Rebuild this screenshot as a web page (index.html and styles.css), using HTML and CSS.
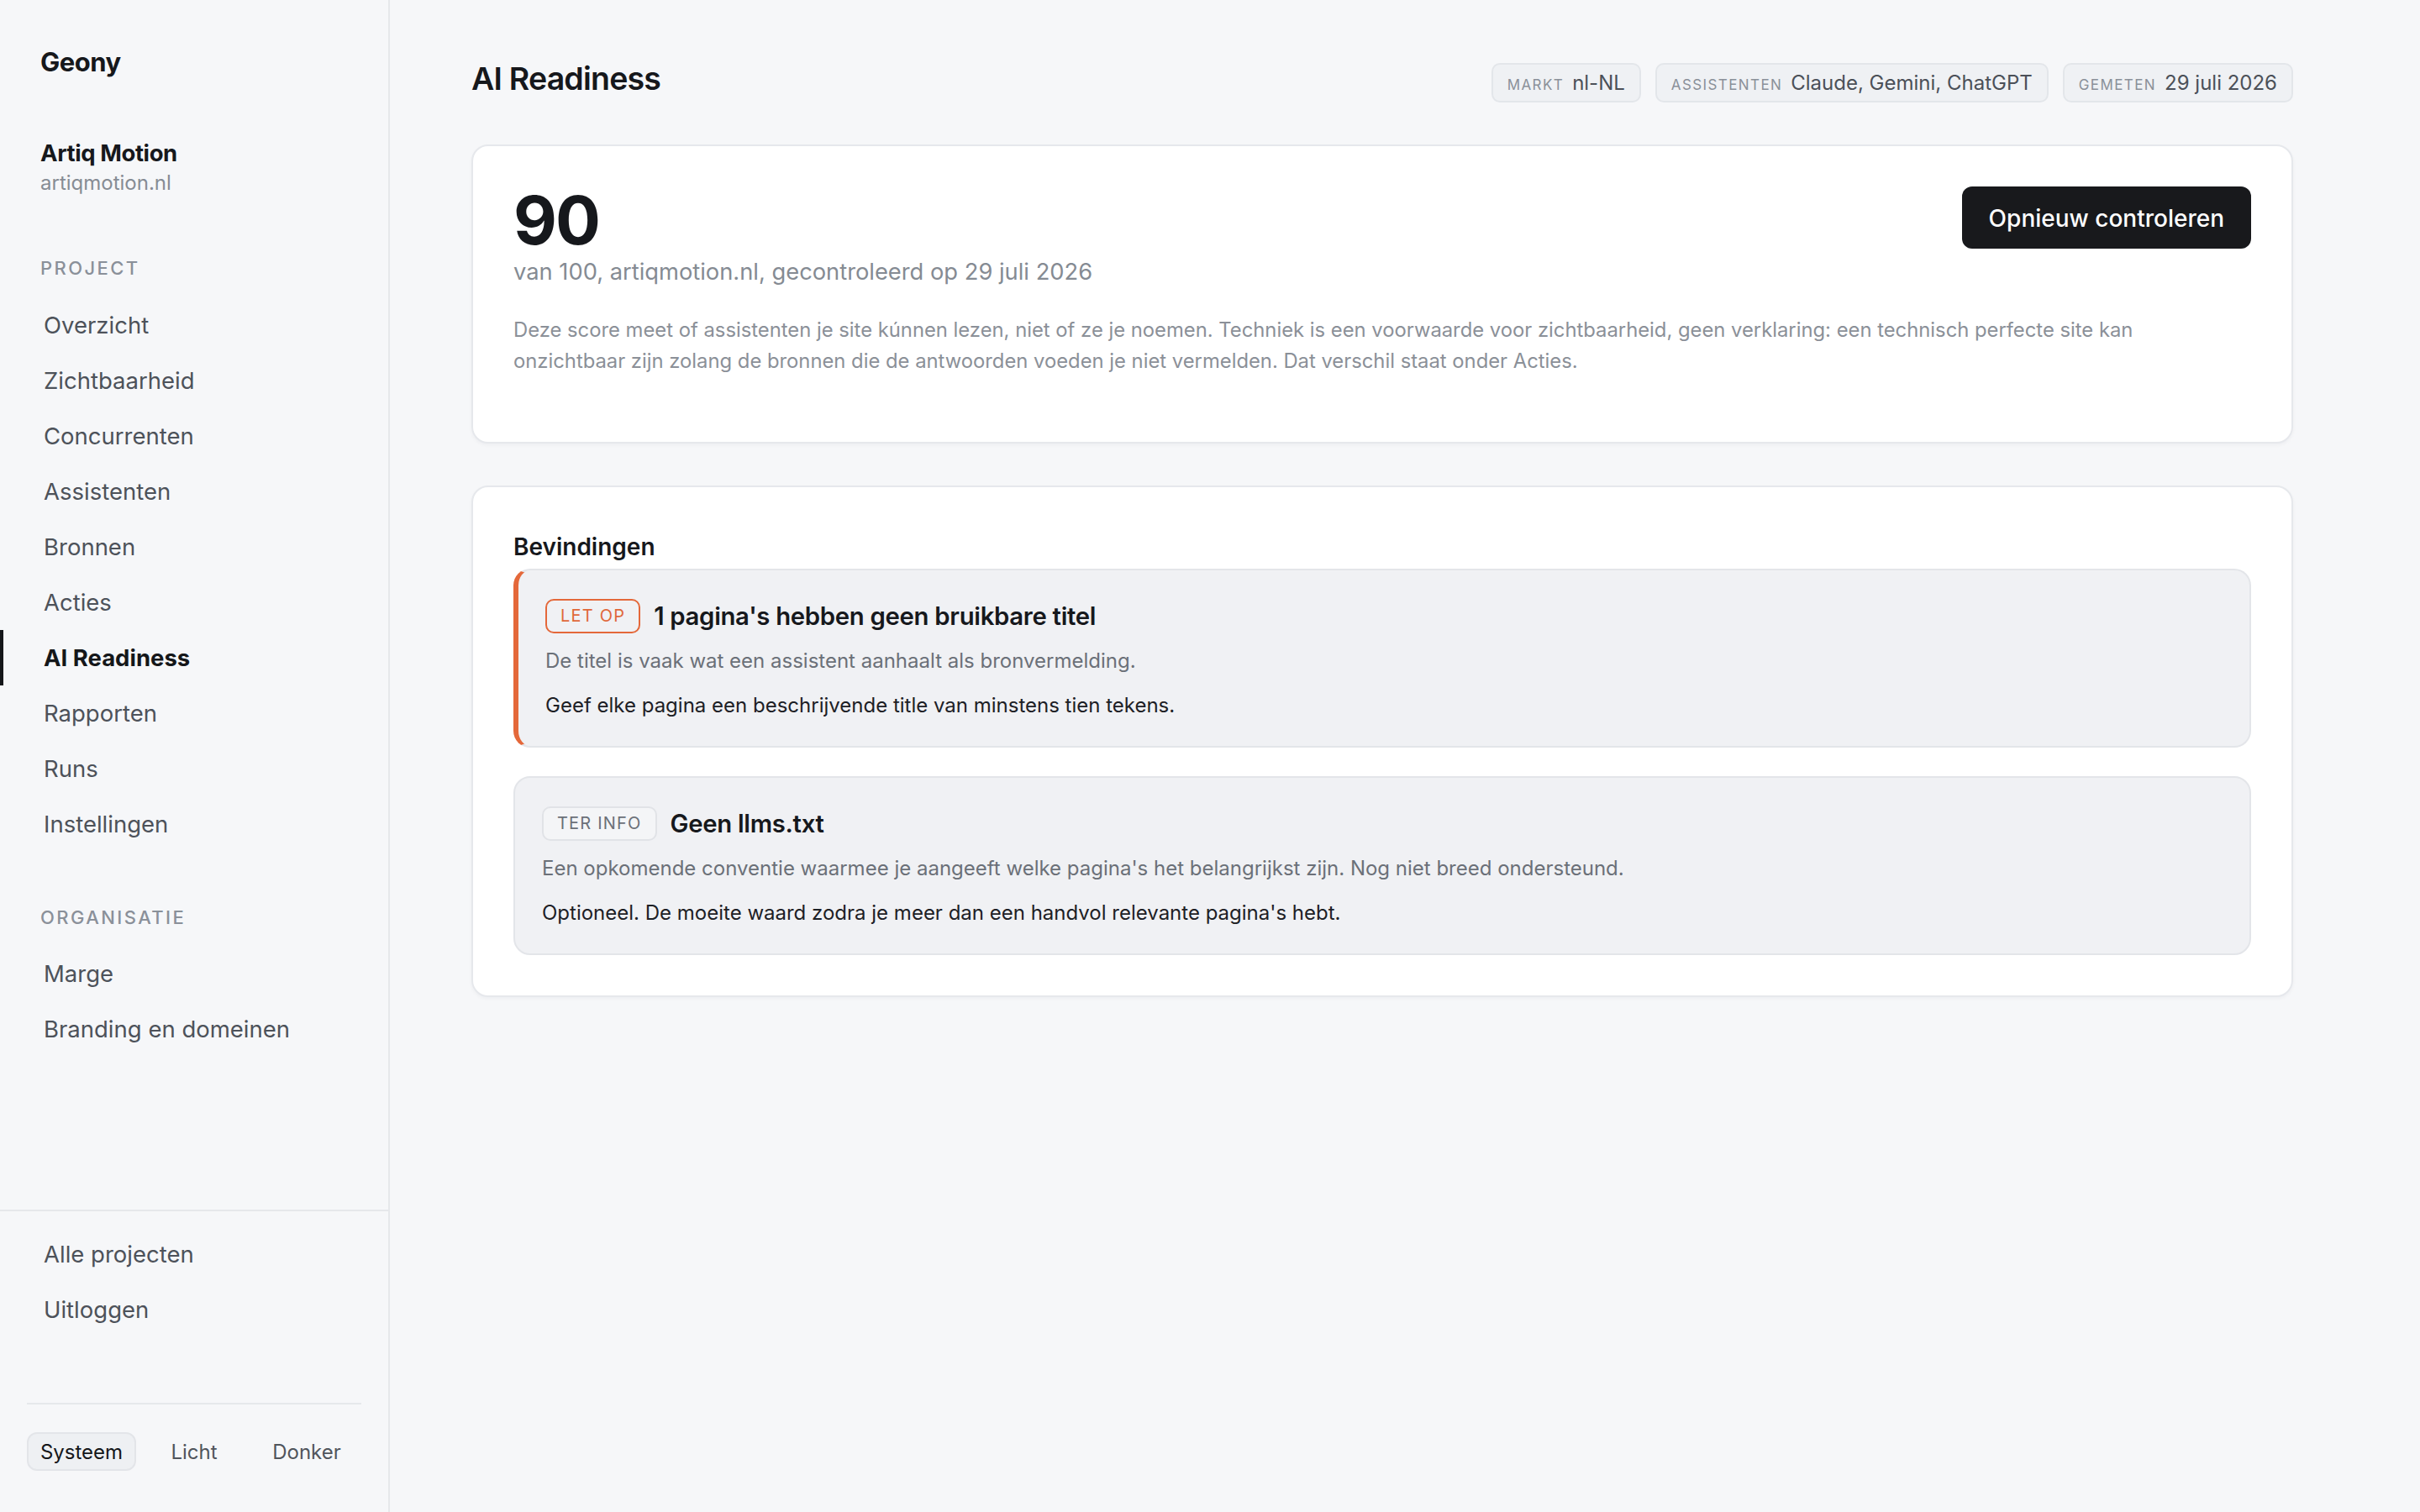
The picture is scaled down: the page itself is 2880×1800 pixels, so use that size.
FILE: index.html
```html
<!DOCTYPE html>
<html lang="nl">
<head>
  <meta charset="UTF-8" />
  <meta name="viewport" content="width=device-width, initial-scale=1.0"/>
  <title>AI Readiness - Geony</title>
  <link rel="stylesheet" href="styles.css">
</head>
<body>

<aside class="sidebar">
  <div class="brand">Geony</div>

  <div class="project">
    <div class="project-name">Artiq Motion</div>
    <div class="project-domain">artiqmotion.nl</div>
  </div>

  <div class="nav-label">Project</div>
  <nav class="nav">
    <a href="#">Overzicht</a>
    <a href="#">Zichtbaarheid</a>
    <a href="#">Concurrenten</a>
    <a href="#">Assistenten</a>
    <a href="#">Bronnen</a>
    <a href="#">Acties</a>
    <a href="#" class="active">AI Readiness</a>
    <a href="#">Rapporten</a>
    <a href="#">Runs</a>
    <a href="#">Instellingen</a>
  </nav>

  <div class="nav-label org">Organisatie</div>
  <nav class="nav">
    <a href="#">Marge</a>
    <a href="#">Branding en domeinen</a>
  </nav>

  <div class="sidebar-footer">
    <nav class="nav">
      <a href="#">Alle projecten</a>
      <a href="#">Uitloggen</a>
    </nav>
    <div class="theme">
      <button class="selected">Systeem</button>
      <button>Licht</button>
      <button>Donker</button>
    </div>
  </div>
</aside>

<main class="main">
  <div class="content">

    <header class="page-head">
      <h1>AI Readiness</h1>
      <div class="chips">
        <span class="chip"><small>Markt</small>nl-NL</span>
        <span class="chip"><small>Assistenten</small>Claude, Gemini, ChatGPT</span>
        <span class="chip"><small>Gemeten</small>29 juli 2026</span>
      </div>
    </header>

    <!-- SCORE -->
    <section class="card score-card">
      <div class="score-top">
        <div>
          <div class="score">90</div>
          <div class="score-sub">van 100, artiqmotion.nl, gecontroleerd op 29 juli 2026</div>
        </div>
        <button class="btn">Opnieuw controleren</button>
      </div>
      <p class="score-note">Deze score meet of assistenten je site kúnnen lezen, niet of ze je noemen. Techniek is een voorwaarde voor zichtbaarheid, geen verklaring: een technisch perfecte site kan onzichtbaar zijn zolang de bronnen die de antwoorden voeden je niet vermelden. Dat verschil staat onder Acties.</p>
    </section>

    <!-- FINDINGS -->
    <section class="card">
      <h2>Bevindingen</h2>

      <div class="finding warn">
        <div class="finding-head">
          <span class="badge">Let op</span>
          <h3>1 pagina's hebben geen bruikbare titel</h3>
        </div>
        <p class="finding-why">De titel is vaak wat een assistent aanhaalt als bronvermelding.</p>
        <p class="finding-fix">Geef elke pagina een beschrijvende title van minstens tien tekens.</p>
      </div>

      <div class="finding">
        <div class="finding-head">
          <span class="badge">Ter info</span>
          <h3>Geen llms.txt</h3>
        </div>
        <p class="finding-why">Een opkomende conventie waarmee je aangeeft welke pagina's het belangrijkst zijn. Nog niet breed ondersteund.</p>
        <p class="finding-fix">Optioneel. De moeite waard zodra je meer dan een handvol relevante pagina's hebt.</p>
      </div>
    </section>

  </div>
</main>

</body>
</html>
```

FILE: styles.css
```css
* {
  box-sizing: border-box;
}
body {
  margin: 0;
  font-family: "Inter", "Noto Sans", sans-serif;
  background: #f6f7f9;
  color: #16181c;
  display: flex;
  min-height: 100vh;
}

/* sidebar */
.sidebar {
  width: 464px;
  flex-shrink: 0;
  min-height: 100vh;
  border-right: 2px solid #e6e8eb;
  display: flex;
  flex-direction: column;
}
.brand {
  padding: 54px 48px 0;
  font-size: 31px;
  line-height: 40px;
  font-weight: 700;
  letter-spacing: -0.5px;
}
.project {
  margin-top: 70px;
  padding: 0 48px;
}
.project-name {
  font-size: 27.5px;
  line-height: 36px;
  font-weight: 700;
  letter-spacing: -0.4px;
}
.project-domain {
  font-size: 24px;
  line-height: 36px;
  color: #868c94;
}
.nav-label {
  margin-top: 67px;
  margin-bottom: 19px;
  padding: 0 48px;
  font-size: 22px;
  line-height: 32px;
  font-weight: 500;
  letter-spacing: 2.4px;
  text-transform: uppercase;
  color: #8a9099;
}
.nav-label.org {
  margin-top: 62px;
  margin-bottom: 18px;
}
.nav a {
  display: block;
  padding: 13px 0 13px 52px;
  font-size: 27.5px;
  line-height: 40px;
  color: #4d525a;
  text-decoration: none;
}
.nav a.active {
  color: #15171a;
  font-weight: 700;
  box-shadow: inset 4px 0 0 #15171a;
}
.sidebar-footer {
  margin-top: auto;
  border-top: 2px solid #e6e8eb;
  padding-top: 18px;
}
.theme {
  margin: 78px 32px 0;
  border-top: 2px solid #e6e8eb;
  padding: 33px 0 49px;
  display: grid;
  grid-template-columns: 1fr 1fr 1fr;
  gap: 4px;
}
.theme button {
  height: 46px;
  border: 2px solid transparent;
  border-radius: 12px;
  background: none;
  font-family: inherit;
  font-size: 24px;
  color: #50555c;
}
.theme button.selected {
  background: #eef0f3;
  border-color: #e3e5e9;
  color: #15171a;
}

/* main */
.main {
  flex: 1;
}
.content {
  max-width: 2362px;
  padding: 0 97px;
}
.page-head {
  display: flex;
  justify-content: space-between;
  align-items: baseline;
  padding-top: 70px;
  margin-bottom: 50px;
}
.page-head h1 {
  margin: 0;
  font-size: 37.5px;
  line-height: 48px;
  font-weight: 600;
  letter-spacing: -0.8px;
}
.chips {
  display: flex;
  gap: 17px;
}
.chip {
  display: inline-block;
  height: 47px;
  padding: 0 17px;
  border: 2px solid #e3e6ea;
  border-radius: 10px;
  background: #eff1f4;
  font-size: 24px;
  line-height: 43px;
  color: #4b5058;
}
.chip small {
  margin-right: 10px;
  font-size: 17px;
  letter-spacing: 1.4px;
  text-transform: uppercase;
  color: #8a9099;
}

.card {
  background: #fff;
  border: 2px solid #e6e8ec;
  border-radius: 20px;
  padding: 48px;
  box-shadow: 0 2px 4px rgba(16, 24, 40, 0.04);
  margin-bottom: 50px;
}
.score-top {
  display: flex;
  justify-content: space-between;
  align-items: flex-start;
}
.score {
  font-size: 80px;
  line-height: 80px;
  font-weight: 700;
  letter-spacing: -2px;
}
.score-sub {
  margin-top: 4px;
  font-size: 27.3px;
  line-height: 36px;
  color: #858b93;
}
.btn {
  height: 74px;
  padding: 2px 32px 0;
  border: none;
  border-radius: 12px;
  background: #18191c;
  color: #fff;
  font-family: inherit;
  font-size: 28px;
  font-weight: 500;
}
.score-note {
  margin: 32px 0 30px;
  max-width: 2040px;
  font-size: 23.8px;
  line-height: 37px;
  color: #8b9098;
}

.card h2 {
  margin: 3px 0 6px;
  font-size: 28px;
  line-height: 40px;
  font-weight: 600;
}
.finding {
  background: #f0f1f4;
  border: 2px solid #e3e5e9;
  border-radius: 20px;
  padding: 34px 32px 30px;
}
.finding + .finding {
  margin-top: 34px;
}
.finding.warn {
  border-left: 6px solid #e4683a;
}
.finding-head {
  display: flex;
  align-items: center;
  gap: 16px;
  height: 41px;
}
.finding-head h3 {
  margin: 0;
  font-size: 29.3px;
  font-weight: 600;
  letter-spacing: -0.3px;
}
.badge {
  height: 41px;
  padding: 0 16px;
  border: 2px solid #e1e3e7;
  border-radius: 10px;
  background: #f4f5f7;
  font-size: 20px;
  line-height: 37px;
  letter-spacing: 1.2px;
  text-transform: uppercase;
  color: #6b7078;
}
.warn .badge {
  border-color: #e4683a;
  background: transparent;
  color: #e0683a;
}
.finding-why {
  margin: 15px 0 0;
  font-size: 24px;
  line-height: 36px;
  color: #6b7078;
}
.finding-fix {
  margin: 17px 0 0;
  font-size: 24px;
  line-height: 36px;
  color: #1d2025;
}
```
